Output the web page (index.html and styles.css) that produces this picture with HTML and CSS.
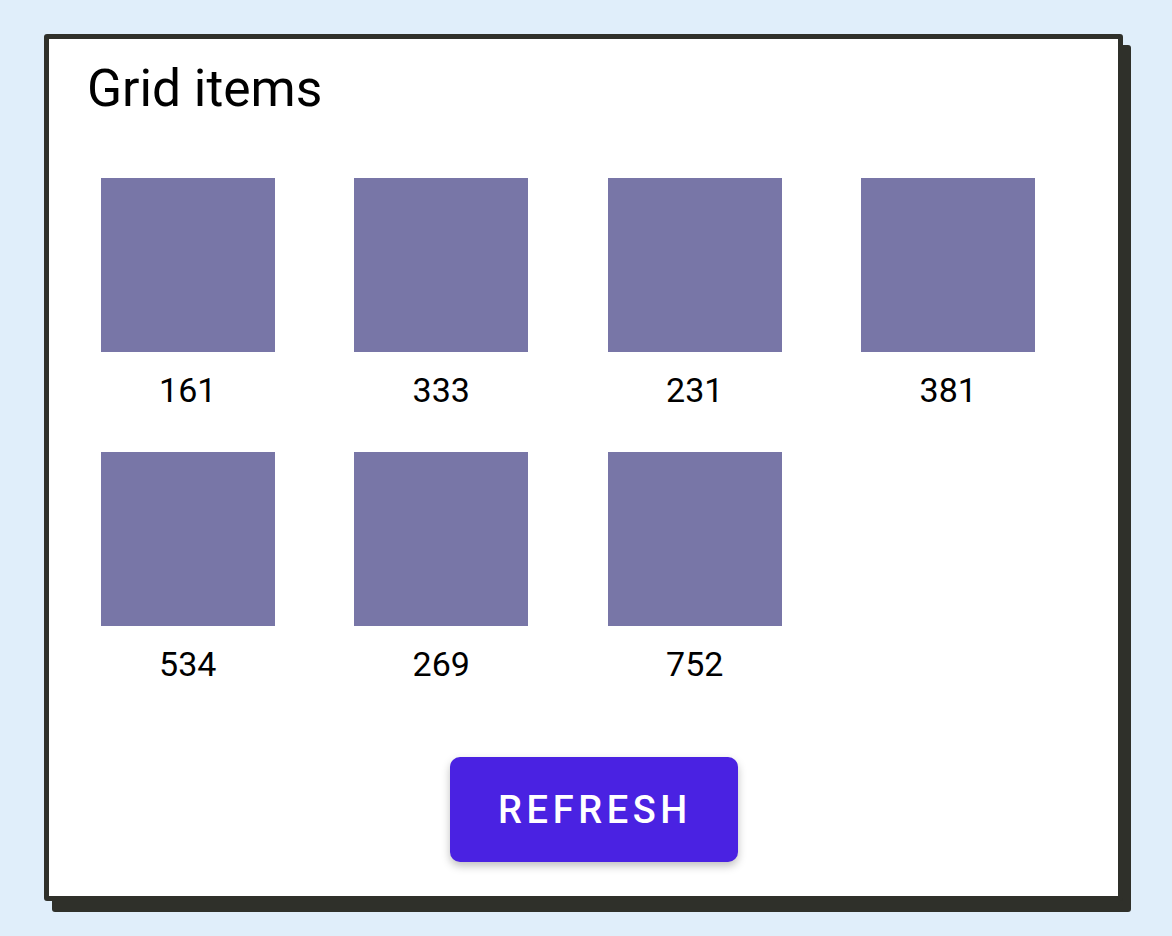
FILE: index.html
```html
<!DOCTYPE html>
<html lang="en">
<head>
  <meta charset="UTF-8" />
  <meta name="viewport" content="width=device-width, initial-scale=1.0" />
  <title>Grid items</title>
  <link rel="stylesheet" href="styles.css">
</head>
<body>
  <!-- Card -->
  <div class="card">
    <h1 class="title">Grid items</h1>

    <div class="grid">
      <div class="cell"><div class="square"></div><div class="label">161</div></div>
      <div class="cell"><div class="square"></div><div class="label">333</div></div>
      <div class="cell"><div class="square"></div><div class="label">231</div></div>
      <div class="cell"><div class="square"></div><div class="label">381</div></div>
      <div class="cell"><div class="square"></div><div class="label">534</div></div>
      <div class="cell"><div class="square"></div><div class="label">269</div></div>
      <div class="cell"><div class="square"></div><div class="label">752</div></div>
    </div>

    <div class="actions">
      <button class="btn">REFRESH</button>
    </div>
  </div>
</body>
</html>
```

FILE: styles.css
```css
* {
  margin: 0; padding: 0;
  box-sizing: border-box;
  font-family: Roboto, 'Liberation Sans', sans-serif;
}
html, body {
  min-height: 100%;
}
body {
  background: #e0eefa;
  padding: 34px 0 35px 44px;
}
.card {
  width: 1079px;
  height: 867px;
  background: #fff;
  border: 5px solid #2f302a;
  border-radius: 3px;
  box-shadow: 8px 11px 0 #2f302a;
  padding: 20px 0 0 12px;
}
.title {
  font-size: 51.5px;
  font-weight: 400;
  line-height: 60px;
  color: #000;
  margin-left: 26px;
}
.grid {
  display: grid;
  grid-template-columns: repeat(4, 253.5px);
  row-gap: 42px;
  margin-top: 59px;
}
.cell {
  display: flex;
  flex-direction: column;
  align-items: center;
}
.square {
  width: 174px;
  height: 174px;
  background: #7876a7;
}
.label {
  margin-top: 18px;
  font-size: 34px;
  line-height: 40px;
  color: #000;
}
.actions {
  display: flex;
  padding-left: 389px;
  margin-top: 73px;
}
.btn {
  width: 288px;
  height: 105px;
  background: #4a22e2;
  color: #fff;
  border: none;
  border-radius: 10px;
  box-shadow: 0 4px 8px rgba(0,0,0,0.25);
  font-size: 38px;
  font-weight: 500;
  letter-spacing: 4.6px;
  text-indent: 2px;
  cursor: pointer;
}
```
